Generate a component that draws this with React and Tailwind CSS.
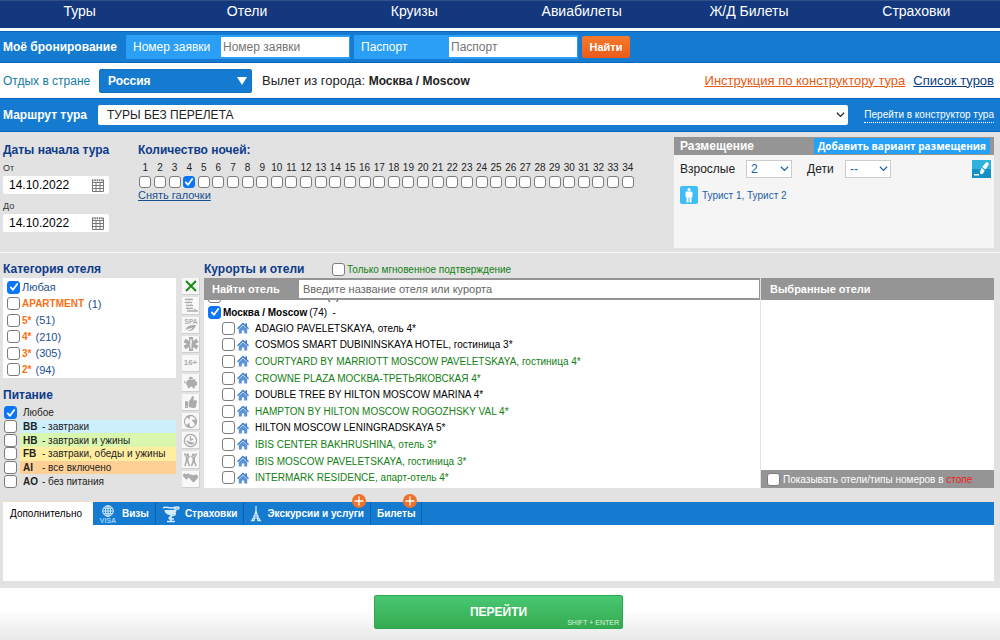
import { useState } from "react";
import { FaThumbsUp, FaPiggyBank, FaHeart } from "react-icons/fa";

const navItems = ["Туры", "Отели", "Круизы", "Авиабилеты", "Ж/Д Билеты", "Страховки"];

const nights = Array.from({ length: 34 }, (_, i) => i + 1);

const categories = [
  { name: "Любая", count: null },
  { name: "APARTMENT", count: 1 },
  { name: "5*", count: 51 },
  { name: "4*", count: 210 },
  { name: "3*", count: 305 },
  { name: "2*", count: 94 },
];

const meals = [
  { code: "", text: "Любое", bg: "" },
  { code: "BB", text: "- завтраки", bg: "bg-[#cdeffb]" },
  { code: "HB", text: "- завтраки и ужины", bg: "bg-[#d9f7ae]" },
  { code: "FB", text: "- завтраки, обеды и ужины", bg: "bg-[#ffeda0]" },
  { code: "AI", text: "- все включено", bg: "bg-[#ffd096]" },
  { code: "AO", text: "- без питания", bg: "" },
];

// instant = hotel can be confirmed at once, shown in green
const hotels = [
  { name: "ADAGIO PAVELETSKAYA, отель 4*", instant: false },
  { name: "COSMOS SMART DUBININSKAYA HOTEL, гостиница 3*", instant: false },
  { name: "COURTYARD BY MARRIOTT MOSCOW PAVELETSKAYA, гостиница 4*", instant: true },
  { name: "CROWNE PLAZA МОСКВА-ТРЕТЬЯКОВСКАЯ 4*", instant: true },
  { name: "DOUBLE TREE BY HILTON MOSCOW MARINA 4*", instant: false },
  { name: "HAMPTON BY HILTON MOSCOW ROGOZHSKY VAL 4*", instant: true },
  { name: "HILTON MOSCOW LENINGRADSKAYA 5*", instant: false },
  { name: "IBIS CENTER BAKHRUSHINA, отель 3*", instant: true },
  { name: "IBIS MOSCOW PAVELETSKAYA, гостиница 3*", instant: true },
  { name: "INTERMARK RESIDENCE, апарт-отель 4*", instant: true },
];

function Check({ small, ...props }) {
  return (
    <span className="grid shrink-0 place-items-center">
      <input
        type="checkbox"
        className={`peer col-start-1 row-start-1 appearance-none rounded-[3px] border border-[#7c7c7c] bg-white checked:border-[#0d75f8] checked:bg-[#0d75f8] ${
          small ? "size-3" : "size-[13px]"
        }`}
        {...props}
      />
      <svg
        viewBox="0 0 12 12"
        className="pointer-events-none col-start-1 row-start-1 hidden size-3 peer-checked:block"
        fill="none"
        stroke="white"
        strokeWidth="1.8"
        strokeLinecap="round"
        strokeLinejoin="round"
      >
        <path d="M2.8 6.4 5 8.8 9.2 3" />
      </svg>
    </span>
  );
}

function Chevron({ className }) {
  return (
    <svg viewBox="0 0 10 6" className={className} fill="none" stroke="currentColor" strokeWidth="1.3">
      <path d="M1 .8l4 4 4-4" />
    </svg>
  );
}

function CalendarIcon() {
  return (
    <svg viewBox="0 0 14 14" className="size-[14px]" fill="none" stroke="#777">
      <path d="M1.5 2v11.5h11V2M1.500 4.500h11M1.500 7.500h11M1.500 10.500h11M5 4v9.500M9 4v9.500" />
      <path d="M1 2.200h12" strokeWidth="2" strokeDasharray="1.500 .8" />
    </svg>
  );
}

function HouseIcon() {
  return (
    <svg viewBox="0 0 12 12" className="size-3 shrink-0">
      <path fill="#3f7cc8" d="M6 .4 0 6.200l1 1L6 2.500l5 4.700 1-1-2-1.900V1.200H8.500v1.600z" />
      <path fill="#5b93d6" d="M1.800 7v4.600h3V8.500h2.400v3.100h3V7L6 3.200z" />
    </svg>
  );
}

function DateField({ id, label }) {
  const [value, setValue] = useState("14.10.2022");
  return (
    <div className="flex flex-col">
      <label htmlFor={id} className="text-[9px] leading-4 text-[#333]">
        {label}
      </label>
      <div className="flex h-[18px] items-center rounded-[2px] bg-white pr-1 pl-[6px]">
        <input
          id={id}
          className="w-full min-w-0 text-[12px] text-black outline-none"
          value={value}
          onChange={(e) => setValue(e.target.value)}
        />
        <button aria-label="Календарь">
          <CalendarIcon />
        </button>
      </div>
    </div>
  );
}

function SmallSelect({ id, options }) {
  return (
    <div className="grid h-[18px] w-[46px] items-center text-[#1560ad]">
      <select
        id={id}
        className="col-start-1 row-start-1 h-full w-full appearance-none border border-[#ccc] bg-white pl-1 text-[12px] leading-4 outline-none"
      >
        {options.map((o) => (
          <option key={o}>{o}</option>
        ))}
      </select>
      <Chevron className="pointer-events-none col-start-1 row-start-1 mr-[3px] w-[9px] justify-self-end" />
    </div>
  );
}

// Icons of the hotel service filters
function ServiceIcons() {
  const icons = [
    {
      title: "Сбросить",
      icon: (
        <svg viewBox="0 0 12 12" className="size-3" stroke="#128a12" strokeWidth="1.900">
          <path d="M1 1l10 10M11 1L1 11" />
        </svg>
      ),
    },
    {
      title: "Пляж",
      icon: (
        <svg viewBox="0 0 16 16" className="size-4" fill="none" stroke="currentColor" strokeWidth="1.500">
          <path d="M2 2c2 1.500 4-.5 8 .6M2 5c2 1.500 4-.5 7 .6M3 8c2 1.500 4-.5 7 .6M3 11c3 1.500 4-.5 7 .6M4 14h7M12 12v3M14 13v2" />
        </svg>
      ),
    },
    {
      title: "SPA",
      icon: (
        <svg viewBox="0 0 16 16" className="size-4" fill="currentColor">
          <text x="8" y="6.500" fontSize="6.500" fontWeight="bold" textAnchor="middle">
            SPA
          </text>
          <path d="M3 13c0-4 4-5 10-5-1 4-5 7-8 5.500 2-.5 4-1.500 5-3-2 1-4 1-7 2.500z" />
        </svg>
      ),
    },
    {
      title: "Лечение",
      icon: (
        <svg viewBox="0 0 16 16" className="size-4" fill="currentColor">
          <path d="M6 1h4v4l3.500-2.200 2 3.400L12 8l3.500 1.800-2 3.400L10 11v4H6v-4l-3.500 2.200-2-3.400L4 8 .5 6.200l2-3.400L6 5z" />
          <path d="M8 3v10M6.800 5c2 0 2.500 1 1.200 2s-1.500 2 0 3" fill="none" stroke="#fff" strokeWidth=".9" />
        </svg>
      ),
    },
    {
      title: "Только взрослые",
      icon: <span className="text-[8px] font-bold">16+</span>,
    },
    { title: "Эконом", icon: <FaPiggyBank className="size-[13px]" /> },
    { title: "Рекомендуем", icon: <FaThumbsUp className="size-3" /> },
    {
      title: "Для детей",
      icon: (
        <svg viewBox="0 0 16 16" className="size-[15px]" fill="currentColor">
          <circle cx="8" cy="8" r="6.500" fill="none" stroke="currentColor" strokeWidth="1.200" />
          <path d="M7 6C5 4 4 3.500 3 4c1-2 4-3 6-2.300C7.500 2.500 7 4 7 6zM9 7c2-1.500 4-1.500 5.500 0 0 2-.5 3.500-2 5C12.500 10 11 8 9 7zM7 8.500c-.5 2 0 4 1.500 6-2.500 0-4.500-1-5.800-3C4.500 11.500 6 10.500 7 8.500z" />
        </svg>
      ),
    },
    {
      title: "Раннее бронирование",
      icon: (
        <svg viewBox="0 0 16 16" className="size-[15px]" fill="none" stroke="currentColor" strokeWidth="1.500">
          <circle cx="8" cy="8" r="6.500" />
          <path d="M8 3.500v4l3-1" />
          <path d="M3.500 8c2 0 3 2 8.500 2-1 3-6 4-8.500-2z" fill="currentColor" stroke="none" />
        </svg>
      ),
    },
    {
      title: "Молодёжный",
      icon: (
        <svg viewBox="0 0 16 16" className="size-[15px]" fill="currentColor">
          <circle cx="5" cy="3" r="1.500" />
          <circle cx="11" cy="3" r="1.500" />
          <path
            d="M1.500 1.500 4 6l-.5 4L2 15M5 6v4l2 5M5 6l2.200-1.500M14.500 1.500 12 6v4l2 5M11 6v4l-2 5M11 6 8.800 4.500"
            fill="none"
            stroke="currentColor"
            strokeWidth="1.600"
          />
        </svg>
      ),
    },
    {
      title: "Для молодожёнов",
      icon: (
        <span className="flex items-center">
          <FaHeart className="mb-1 size-[7px]" />
          <FaHeart className="-ml-px size-[9px]" />
        </span>
      ),
    },
  ];
  return (
    <div className="grid h-[210px] w-[18px] shrink-0 grid-rows-11 gap-[2px] text-[#ababab]">
      {icons.map((item) => (
        <button
          key={item.title}
          aria-label={item.title}
          className="flex min-h-0 items-center justify-center overflow-hidden border-r border-b border-[#cfcfcf] bg-[#f8f8f8]"
        >
          {item.icon}
        </button>
      ))}
    </div>
  );
}

function VisaIcon() {
  return (
    <svg viewBox="0 0 18 18" className="size-[18px]" fill="none" stroke="#d8ecfb">
      <circle cx="9" cy="6" r="5.300" />
      <ellipse cx="9" cy="6" rx="2.500" ry="5.300" />
      <path d="M9 .7v10.600M3.700 6h10.600M4.600 3.300h8.800M4.600 8.700h8.800" />
      <text x="9" y="17.500" textAnchor="middle" fontSize="7" fontWeight="bold" fill="#9fd0f7" stroke="none">
        VISA
      </text>
    </svg>
  );
}

function CupIcon() {
  return (
    <svg viewBox="0 0 18 18" className="size-[18px]" fill="none" stroke="#d8ecfb" strokeWidth="1.500">
      <path d="M1 3c2-2 5 0 8 0s4-1.500 7-1c1.500.5 1 2-.5 2H12" />
      <path d="M2.500 5h12c0 3-3 5-6 5s-6-2-6-5z" fill="#d8ecfb" stroke="none" />
      <path d="M9 10v6M5 16.500h8M13 8c2 3-5 2-6 5 0 1.500 3 1 5 1" />
    </svg>
  );
}

function TowerIcon() {
  return (
    <svg viewBox="0 0 12 18" className="h-[17px] w-3" fill="none" stroke="#d8ecfb" strokeWidth="1.300">
      <path d="M6 1v5M6 5c0 5-2 8-4.500 11.500H4c0-4 4-4 4 0h2.500C8 13 6 10 6 5z" />
      <path d="M3.500 11.500h5M4.700 8.500h2.600" />
    </svg>
  );
}

const tabs = [
  { name: "Дополнительно", pad: "pl-[7px] pr-[11px]" },
  { name: "Визы", icon: <VisaIcon />, pad: "px-[6px]" },
  { name: "Страховки", icon: <CupIcon />, pad: "px-[6px]" },
  { name: "Экскурсии и услуги", icon: <TowerIcon />, plus: true, pad: "px-[6px]" },
  { name: "Билеты", plus: true, pad: "px-[6px]" },
];

function App() {
  const [checkedNights, setCheckedNights] = useState([4]);
  const [category, setCategory] = useState(["Любая"]);
  const [meal, setMeal] = useState(["Любое"]);
  const [tab, setTab] = useState("Дополнительно");

  const toggle = (list, setList, item) => {
    setList(list.includes(item) ? list.filter((x) => x !== item) : [...list, item]);
  };

  return (
    <div className="flex min-h-screen flex-col overflow-hidden bg-white font-['Liberation_Sans',Arial,sans-serif] text-[10px] text-[#222]">
      <nav className="border-t border-[#315287] bg-[#13387e]">
        <div className="-ml-1 grid h-[27px] grid-cols-6 text-center text-[14px] leading-5 text-white">
          {navItems.map((item) => (
            <a key={item} href="#">
              {item}
            </a>
          ))}
        </div>
      </nav>

      {/* booking search */}
      <form
        className="mt-[3px] flex h-8 items-center border-y border-[#0a66bd] bg-[#147bd1] pl-[3px] text-[12px] text-white"
        onSubmit={(e) => e.preventDefault()}
      >
        <b className="w-[123px]">Моё бронирование</b>
        <div className="flex h-6 items-center bg-[#2b9ff5] p-px">
          <label htmlFor="order" className="w-[94px] pl-[6px]">
            Номер заявки
          </label>
          <input
            id="order"
            placeholder="Номер заявки"
            className="h-5 w-[128px] bg-white px-[2px] text-black placeholder:text-[#757575]"
          />
        </div>
        <div className="ml-1 flex h-6 items-center bg-[#2b9ff5] p-px">
          <label htmlFor="passport" className="w-[94px] pl-[6px]">
            Паспорт
          </label>
          <input
            id="passport"
            placeholder="Паспорт"
            className="h-5 w-[128px] bg-white px-[2px] text-black placeholder:text-[#757575]"
          />
        </div>
        <button className="ml-1 h-[22px] w-12 rounded-[2px] bg-linear-to-b from-[#f47a2b] to-[#ec5a1c] text-[11px] font-bold">
          Найти
        </button>
      </form>

      <div className="flex h-[35px] items-center pr-[6px] pl-[3px] text-[13px]">
        <label htmlFor="country" className="w-24 text-[12px] text-[#147ba3]">
          Отдых в стране
        </label>
        <div className="grid h-6 w-[153px] items-center text-[12px] text-white">
          <select
            id="country"
            className="col-start-1 row-start-1 h-full w-full appearance-none rounded-[2px] border border-[#1270bf] bg-[#147bd1] pl-2 font-bold outline-none"
          >
            <option>Россия</option>
          </select>
          <svg
            viewBox="0 0 10 8"
            className="pointer-events-none col-start-1 row-start-1 mr-[5px] w-[10px] justify-self-end"
            fill="white"
          >
            <path d="M0 0h10L5 8z" />
          </svg>
        </div>
        <p className="ml-[10px]">
          Вылет из города: <b className="text-[12px]">Москва / Moscow</b>
        </p>
        <div className="ml-auto flex gap-2">
          <a href="#" className="text-[#e95a12] underline">
            Инструкция по конструктору тура
          </a>
          <a href="#" className="text-[#0d3b82] underline">
            Список туров
          </a>
        </div>
      </div>

      <div className="flex h-[34px] items-center border-y border-[#0a66bd] bg-[#147bd1] pr-[6px] pl-[3px] text-white">
        <label htmlFor="route" className="w-[95px] text-[12px] font-bold">
          Маршрут тура
        </label>
        <div className="grid h-5 flex-1 items-center text-[#222]">
          <select
            id="route"
            className="col-start-1 row-start-1 h-full w-full appearance-none rounded-[2px] bg-white pl-[9px] text-[12px] outline-none"
          >
            <option>ТУРЫ БЕЗ ПЕРЕЛЕТА</option>
          </select>
          <Chevron className="pointer-events-none col-start-1 row-start-1 mr-[3px] w-[9px] justify-self-end" />
        </div>
        <a href="#" className="ml-4 border-b border-dotted border-white leading-[14px]">
          Перейти в конструктор тура
        </a>
      </div>

      {/* dates, nights, tourists */}
      <section className="flex border-b border-[#f4f4f4] bg-[#e2e2e2] pt-[5px] pr-[6px] pb-1 pl-[3px]">
        <div className="flex w-[135px] flex-col pt-[5px]">
          <h2 className="text-[12px] leading-4 font-bold text-[#0d3b8a]">Даты начала тура</h2>
          <div className="mt-[2px] flex w-[106px] flex-col gap-1">
            <DateField id="from" label="От" />
            <DateField id="to" label="До" />
          </div>
        </div>
        <div className="pt-[5px]">
          <h2 className="text-[12px] leading-4 font-bold text-[#0d3b8a]">Количество ночей:</h2>
          <div className="mt-1 grid w-[497px] grid-cols-[repeat(34,1fr)]">
            {nights.map((n) => (
              <label key={n} className="flex flex-col items-center gap-[2px] leading-3">
                {n}
                <Check
                  small
                  checked={checkedNights.includes(n)}
                  onChange={() => toggle(checkedNights, setCheckedNights, n)}
                />
              </label>
            ))}
          </div>
          <button
            className="mt-px block text-[11px] leading-3 text-[#15508f] underline"
            onClick={() => setCheckedNights([])}
          >
            Снять галочки
          </button>
        </div>
        <div className="ml-auto h-[111px] w-[320px] bg-[#f5f5f5]">
          <div className="flex h-[18px] items-center justify-between bg-[#959595] pr-1 pl-[6px] text-white">
            <h2 className="text-[12px] font-bold">Размещение</h2>
            <button className="h-4 bg-[#26a0f8] px-1 font-['Open_Sans',sans-serif] leading-4 font-bold">
              Добавить вариант размещения
            </button>
          </div>
          <div className="flex items-center pt-[5px] pr-[3px] pl-[6px] text-[12px]">
            <label htmlFor="adults" className="w-[66px]">
              Взрослые
            </label>
            <SmallSelect id="adults" options={["2", "1", "3", "4"]} />
            <label htmlFor="kids" className="ml-[15px] w-[38px]">
              Дети
            </label>
            <SmallSelect id="kids" options={["--", "1", "2", "3"]} />
            <button aria-label="Очистить" className="ml-auto">
              <svg viewBox="0 0 19 18" className="h-[18px] w-[19px]">
                <path fill="#2fb2dc" d="M0 0h19v18H0z" />
                <path fill="#1590c4" d="M0 9h19v9H0z" />
                <path
                  fill="#fff"
                  d="M14 2.500c1.500-1 3.500.5 2.500 2.200L13.500 9.500 10.200 7zM9.600 8l3.200 2.500-2 3.200c-1 1.200-3.500 0-2.800-2zM2 14h5v1.600H2z"
                />
              </svg>
            </button>
          </div>
          <div className="mt-2 flex items-center gap-1 pl-[6px] text-[#1c5fa5]">
            <svg viewBox="0 0 18 18" className="size-[18px]">
              <rect width="18" height="18" rx="2" fill="#3fbdf6" />
              <circle cx="9" cy="3.500" r="1.600" fill="#fff" />
              <path fill="#fff" d="M6.500 5.500h5q1 0 1 1V11h-1V7.500V16.500h-2v-5h-1v5h-2V7.500V11h-1V6.500q0-1 1-1z" />
            </svg>
            Турист 1, Турист 2
          </div>
        </div>
      </section>

      {/* hotels */}
      <section className="bg-[#e2e2e2] pt-[7px] pr-[6px] pb-[7px] pl-[3px]">
        <div className="flex">
          <div className="flex w-[173px] shrink-0 flex-col">
            <h2 className="text-[12px] leading-[18px] font-bold text-[#0d3b8a]">Категория отеля</h2>
            <div className="grid h-[100px] grid-rows-6 bg-white pt-px pl-1">
              {categories.map((c) => (
                <label key={c.name} className="flex min-h-0 items-center gap-[2px] text-[#1c4f91]">
                  <Check
                    checked={category.includes(c.name)}
                    onChange={() => toggle(category, setCategory, c.name)}
                  />
                  {c.count ? (
                    <>
                      <b className="text-[#f87114]">{c.name}</b>
                      <span className="ml-[2px] text-[11px]">({c.count})</span>
                    </>
                  ) : (
                    <span className="text-[11px]">{c.name}</span>
                  )}
                </label>
              ))}
            </div>
            <h2 className="pt-2 pb-[2px] text-[12px] leading-[18px] font-bold text-[#0d3b8a]">Питание</h2>
            <div className="grid h-[82px] grid-rows-6 pl-px">
              {meals.map((m) => (
                <label key={m.text} className="flex min-h-0 items-center gap-[3px]">
                  <Check checked={meal.includes(m.text)} onChange={() => toggle(meal, setMeal, m.text)} />
                  <span className={`flex h-full flex-1 items-center pl-[3px] whitespace-nowrap ${m.bg}`}>
                    {m.code && <b className="w-[19px]">{m.code}</b>}
                    {m.text}
                  </span>
                </label>
              ))}
            </div>
          </div>

          <div className="mt-[18px] mr-1 ml-[6px]">
            <ServiceIcons />
          </div>

          <div className="flex min-w-0 flex-1 flex-col">
            <div className="flex h-[18px] items-center">
              <h2 className="w-32 text-[12px] font-bold text-[#0d3b8a]">Курорты и отели</h2>
              <label className="flex items-center gap-[2px] text-[#128012]">
                <Check />
                Только мгновенное подтверждение
              </label>
            </div>
            <div className="flex h-[22px] items-center bg-[#959595] pr-px">
              <label htmlFor="hotel" className="w-[95px] pl-2 text-[11px] font-bold text-white">
                Найти отель
              </label>
              <input
                id="hotel"
                placeholder="Введите название отеля или курорта"
                className="h-[18px] min-w-0 flex-1 bg-white px-1 text-[11px] placeholder:text-[#666]"
              />
            </div>
            <div className="h-[188px] overflow-hidden bg-white pl-1 text-black">
              {/* list stands scrolled to Moscow */}
              <label className="-mt-3 flex h-4 items-center gap-[2px]">
                <Check />
                <b>Московская область</b> (4)
              </label>
              <label className="flex h-4 items-center gap-[2px]">
                <Check defaultChecked />
                <b>Москва / Moscow</b> (74) &nbsp;-
              </label>
              <div className="grid h-[166px] grid-rows-10 pl-[14px]">
                {hotels.map((h) => (
                  <label key={h.name} className="flex min-h-0 items-center gap-[2px]">
                    <Check />
                    <HouseIcon />
                    <span className={`ml-1 whitespace-nowrap ${h.instant ? "text-[#128012]" : ""}`}>{h.name}</span>
                  </label>
                ))}
              </div>
              <label className="flex h-4 items-center pl-[14px]">
                <Check />
              </label>
            </div>
          </div>

          <div className="mt-[18px] ml-px flex w-[233px] shrink-0 flex-col bg-white">
            <h2 className="h-[22px] bg-[#959595] pl-[9px] text-[11px] leading-[22px] font-bold text-white">
              Выбранные отели
            </h2>
            <label className="mt-auto flex h-[18px] items-center gap-[3px] bg-[#959595] pl-[6px] whitespace-nowrap text-white">
              <Check />
              <span>
                Показывать отели/типы номеров в <span className="text-[#f01818]">стопе</span>
              </span>
            </label>
          </div>
        </div>

        <div className="mt-[13px] border-t border-[#f3dcc8] bg-white">
          <div className="flex h-[23px] bg-[#147bd1] text-white">
            {tabs.map((t) => (
              <button
                key={t.name}
                onClick={() => setTab(t.name)}
                className={`relative flex items-center gap-[5px] whitespace-nowrap ${t.pad} ${
                  tab === t.name ? "bg-white text-black" : "border-r border-[#0e62ad] font-bold"
                }`}
              >
                {t.icon}
                {t.name}
                {t.plus && (
                  <svg viewBox="0 0 14 14" className="absolute -top-2 right-1 size-[14px]">
                    <circle cx="7" cy="7" r="7" fill="#f0722a" />
                    <path d="M7 2.500v9M2.500 7h9" stroke="#fff" strokeWidth="1.300" />
                  </svg>
                )}
              </button>
            ))}
          </div>
          <div className="h-14" />
        </div>
      </section>

      <footer className="flex flex-1 items-start justify-center bg-linear-to-b from-white from-40% to-[#e9e9e9] pt-[7px] pr-[3px] pb-[11px]">
        <button className="grid h-[34px] w-[249px] rounded-[2px] border border-[#2ba653] bg-linear-to-b from-[#48c772] to-[#36ab50] text-white">
          <span className="col-start-1 row-start-1 self-center text-[12px] font-bold">ПЕРЕЙТИ</span>
          <span className="col-start-1 row-start-1 self-end justify-self-end pr-[3px] text-[7px] leading-[10px] text-[#d6f5de]">
            SHIFT + ENTER
          </span>
        </button>
      </footer>
    </div>
  );
}

export default App;
